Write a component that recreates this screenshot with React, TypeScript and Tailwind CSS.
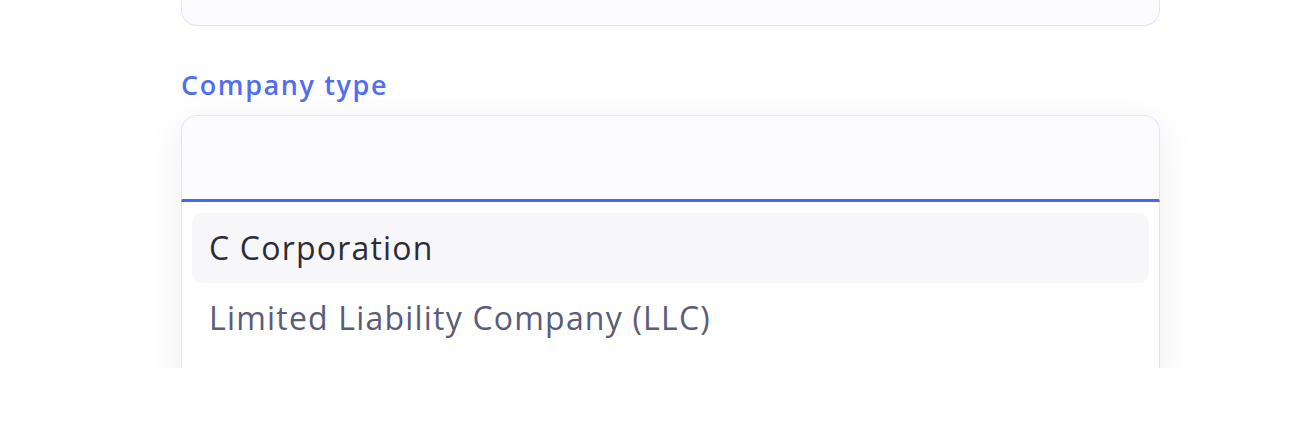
export default function App() {
  const options = ["C Corporation", "Limited Liability Company (LLC)"];

  return (
    <div className="h-[424px] w-[1312px] bg-white">
      <div className="h-[368px] overflow-hidden">
        <div className="ml-[181px] w-[979px] font-['Open_Sans',sans-serif]">
          {/* previous field, mostly scrolled out */}
          <div className="h-[26px] rounded-b-[16px] border border-t-0 border-[#e0e3fe] bg-[#fcfcff]" />

          <label className="mt-[42px] block text-[27px] font-semibold leading-[34px] tracking-[1.6px] text-[#526ef0]">
            Company type
          </label>

          <div className="mt-[13px] rounded-t-[16px] shadow-[0_8px_40px_rgba(20,20,60,0.07)]">
            <div className="h-[87px] rounded-t-[16px] border border-b-[3px] border-[#e0e3fe] border-b-[#4a66ee] bg-[#fcfcff]" />
            <div className="border-x border-[#e0e3fe] bg-white px-[10px] pt-[11px] pb-[40px]">
              {options.map((o, i) => (
                <div
                  key={o}
                  className={`flex h-[70px] items-center rounded-[10px] px-[17px] text-[32px] tracking-[1.2px] ${
                    i === 0 ? "bg-[#f7f7f9] text-[#2c2c38]" : "text-[#5b5b7a]"
                  }`}
                >
                  {o}
                </div>
              ))}
            </div>
          </div>
        </div>
      </div>
    </div>
  );
}
